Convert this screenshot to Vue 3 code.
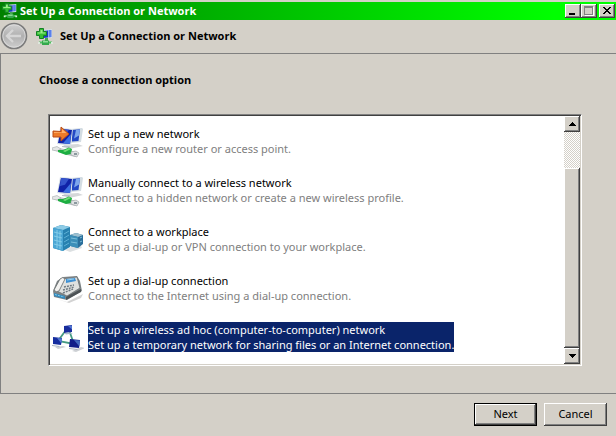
<template>
  <div class="window">
    <header class="title-bar">
      <svg class="title-icon" width="16" height="16" viewBox="0 0 18 18" aria-hidden="true">
        <use href="#connection-icon" />
      </svg>
      <span class="title-text">{{ title }}</span>
      <div class="window-buttons">
        <button type="button" class="bevel caption-btn" aria-label="Minimize">
          <svg width="12" height="10" shape-rendering="crispEdges"><path d="M2 7h6v2H2z" /></svg>
        </button>
        <button type="button" class="bevel caption-btn" aria-label="Maximize" disabled>
          <svg width="12" height="10" shape-rendering="crispEdges">
            <path d="M2 1h9v9H2z" fill="#fff" />
            <path d="M1 0h9v9H1z" fill="#808080" />
            <path d="M2 2h7v6H2z" fill="#d4d0c8" />
          </svg>
        </button>
        <button type="button" class="bevel caption-btn close-btn" aria-label="Close">
          <svg width="12" height="10" shape-rendering="crispEdges">
            <path d="M2 1h2v1h1v1h2V2h1V1h2v1H9v1H8v1H7v1h1v1h1v1h1v1H8V7H7V6H5v1H4v1H2V7h1V6h1V5h1V4H4V3H3V2H2z" />
          </svg>
        </button>
      </div>
    </header>

    <div class="wizard-header">
      <button type="button" class="back-btn" aria-label="Back" disabled>
        <svg width="28" height="28" viewBox="0 0 28 28">
          <defs>
            <linearGradient id="back-fill" x1="0" y1="0" x2="0" y2="1">
              <stop offset="0" stop-color="#d2d2d2" />
              <stop offset=".5" stop-color="#b0b0b0" />
              <stop offset="1" stop-color="#cfcfcf" />
            </linearGradient>
          </defs>
          <circle cx="14" cy="14" r="12.5" fill="url(#back-fill)" stroke="#7c7c7c" stroke-width="1.6" />
          <circle cx="14" cy="14" r="11.2" fill="none" stroke="#dedede" stroke-width=".8" />
          <path d="M13 8l-6 6 6 6M7.500 14H21" fill="none" stroke="#d6d6d6" stroke-width="2.400" />
        </svg>
      </button>
      <svg class="wizard-icon" width="18" height="18" viewBox="0 0 18 18" aria-hidden="true">
        <g id="connection-icon">
          <path d="M6 2l10-1v9l-9 1z" fill="#d5dde5" />
          <path d="M7 3l5-.5v7L7.500 10z" fill="#1838c8" />
          <path d="M12.500 2l3 0v7l-3 .5z" fill="#5a80ec" />
          <path d="M8 3l3-.3-2 5H7.500z" fill="#7fa5f5" />
          <path d="M9 10h3v4H9z" fill="#47a853" />
          <path d="M3 13.500h13v2H3z" fill="#4fc261" />
          <path d="M6 12.500h7v4.500H6z" fill="#35a84c" />
          <path d="M7 13h5v1.500H7z" fill="#8be096" />
          <path d="M2 14h2v2H2zM15 14h2v2h-2z" fill="#dce8dc" />
          <path d="M3.500.5h4v3h3v4h-3v3h-4v-3h-3v-4h3z" fill="#36be35" stroke="#158126" />
          <path d="M4.500 2h2v2.500h3v1h-8v-1h3z" fill="#9aed88" />
        </g>
      </svg>
      <span class="title-text">{{ title }}</span>
    </div>

    <main class="content">
      <h1 class="heading">Choose a connection option</h1>

      <div class="list-box">
        <ul class="options">
          <li v-for="option in options" :key="option.id">
            <button
              type="button"
              class="option"
              :class="{ selected: selected === option.id }"
              :aria-pressed="selected === option.id"
              @click="selected = option.id"
            >
              <svg class="option-icon" width="32" height="32" viewBox="0 0 32 32" aria-hidden="true">
                <g v-if="option.icon === 'router' || option.icon === 'wireless'">
                  <path d="M11 19l15-1 5 2-14 3z" fill="#d5d7d9" />
                  <path d="M19 3l11-1 1 1-2 13-10 1z" fill="#d3dce2" />
                  <path d="M20 4l8-.7-1.500 11.700-6.500.5z" fill="#2448c4" />
                  <path d="M24 4l4-.5-1 6-5 3z" fill="#7da6ec" />
                  <path d="M8 2l13 1-2 17L5 18z" fill="#d6dfe8" />
                  <path d="M9 3l11 1-2 14L6 17z" fill="#1022a8" />
                  <path d="M9 3l8 .8-4 6-5 1.200z" fill="#3554cc" />
                  <path d="M19 8l-1 10-7-.7z" fill="#3d70e2" />
                  <path d="M10 20l8 0-1 2-7-1z" fill="#b8bfc7" />
                  <path d="M1 23l7-1 17 4 2 2-4 3-8-2-14-5z" fill="#c4c9cb" />
                  <path d="M0 22l5-1.500 4 2.500-4 2-5-1z" fill="#e5e7e8" stroke="#a3a8aa" stroke-width=".6" />
                  <path d="M6 24l5 0 6-2.500 3 1.500-1 5-5 1-8-3z" fill="#1dae42" />
                  <path d="M11 25l6-3 2 1-6 3z" fill="#74dc78" />
                  <path d="M19 26l5-1 3 2-2 4-6-2z" fill="#dfe2e3" stroke="#9ca2a5" stroke-width=".6" />
                  <path d="M22 27h3v2h-3z" fill="#8b999f" />
                  <g v-if="option.icon === 'router'">
                    <path d="M1 5l8 .5V1l8 7-8 7v-4H1z" fill="#ed7b29" stroke="#b94b16" />
                    <path d="M2 6l8 .4V3l4.500 4H2z" fill="#ffb06a" />
                  </g>
                </g>

                <g v-else-if="option.icon === 'workplace'">
                  <path d="M13 26l6-3 10-1 1 2-12 4z" fill="#dce0e2" />
                  <path d="M1 4l8-3 9 2v20l-7 4L1 24z" fill="#2781b0" />
                  <path d="M1 4l8-3 9 2-7 3z" fill="#8dcbe6" />
                  <path d="M1 4l10 2v21L1 24z" fill="#4ba6d4" />
                  <path d="M2 8l8 2M2 12l8 2M2 16l8 2M2 20l8 2M5 6v18M8 7v18" stroke="#83cdea" />
                  <path d="M12 10l5-3M12 14l5-3M12 18l5-3M12 22l5-3" stroke="#5cb0d6" />
                  <path d="M18 11l6-2 7 2v9l-5 4-8-2z" fill="#2b6f9b" />
                  <path d="M18 11l6-2 7 2-5 2z" fill="#9dc0d0" />
                  <path d="M18 11l8 2v11l-8-2z" fill="#3d8fb8" />
                  <path d="M19 14l6 1M19 18l6 1M28 14l2-1M28 18l2-1" stroke="#7bbedb" />
                </g>

                <g v-else-if="option.icon === 'phone'">
                  <path d="M5 26l10 3 16-8-2 4-12 5z" fill="#d3d3d3" />
                  <path d="M1 18l4-10 6-4L25 3l3 5 2 10-15 9-13-3z" fill="#7e8486" />
                  <path d="M3 17l7-11 15-2 3 11-13 8z" fill="#dfe1df" stroke="#63696b" stroke-width=".7" />
                  <path d="M14 6l9-1 1 3-10 2z" fill="#3e90d3" />
                  <path d="M15 7l7-1" stroke="#91cff1" />
                  <path d="M12 14l10-2M11 17l11-3M11 20l10-4" stroke="#6f7a82" stroke-width="1.500" stroke-dasharray="2 1" />
                  <path d="M2 17l6-11q3-3 5 0l-6 12q-3 2-5-1z" fill="#f2f2f0" stroke="#63696b" stroke-width=".8" />
                  <path d="M2 20l11 3v3L2 23z" fill="#3387bb" />
                  <path d="M3 21.500l9 2.500" stroke="#7dccea" stroke-dasharray="2 1" />
                  <path d="M14 24l15-8v3l-15 8z" fill="#4c5255" />
                </g>

                <g v-else>
                  <path d="M14 8L6 19l16 3L17 8" fill="none" stroke="#459b83" stroke-width="1.800" />
                  <path d="M3 25l8-1 3 1-8 2zM20 29l9-4 4 1-9 4z" fill="#cdd0d4" />
                  <path d="M12 4l8-1v7l-8 1z" fill="#182c9c" />
                  <path d="M16 4l4-.5v4z" fill="#5275d2" />
                  <path d="M12 11l6-.5 3 1-7 1z" fill="#a7b9c6" />
                  <path d="M1 15l9 1-1 7-8-1z" fill="#152d9f" />
                  <path d="M5 16l5 .5-.5 5z" fill="#557ad0" />
                  <path d="M0 23l8 1-1 1-7-1z" fill="#a8b4c2" />
                  <path d="M18 17l10 1-1 8-10-1z" fill="#101d89" />
                  <path d="M22 18l6 .5-.6 6z" fill="#4066bd" />
                  <path d="M17 26l9 1-1 1-8-1z" fill="#a9b2be" />
                </g>
              </svg>
              <span class="option-text">
                <span class="option-title">{{ option.title }}</span>
                <span class="option-note">{{ option.note }}</span>
              </span>
            </button>
          </li>
        </ul>

        <div class="scrollbar">
          <button type="button" class="bevel scroll-btn" aria-label="Scroll up">
            <svg width="7" height="4" shape-rendering="crispEdges"><path d="M3 0h1v1h1v1h1v1h1v1H0V3h1V2h1V1h1z" /></svg>
          </button>
          <div class="scroll-track"></div>
          <div class="bevel scroll-thumb"></div>
          <button type="button" class="bevel scroll-btn" aria-label="Scroll down">
            <svg width="7" height="4" shape-rendering="crispEdges"><path d="M0 0h7v1H6v1H5v1H4v1H3V3H2V2H1V1H0z" /></svg>
          </button>
        </div>
      </div>
    </main>

    <footer class="footer">
      <button type="button" class="default-frame"><span class="bevel push-btn">Next</span></button>
      <button type="button" class="bevel push-btn">Cancel</button>
    </footer>
  </div>
</template>

<script setup>
import { ref } from 'vue'

const title = 'Set Up a Connection or Network'

const options = [
  { id: 1, icon: 'router', title: 'Set up a new network', note: 'Configure a new router or access point.' },
  { id: 2, icon: 'wireless', title: 'Manually connect to a wireless network', note: 'Connect to a hidden network or create a new wireless profile.' },
  { id: 3, icon: 'workplace', title: 'Connect to a workplace', note: 'Set up a dial-up or VPN connection to your workplace.' },
  { id: 4, icon: 'phone', title: 'Set up a dial-up connection', note: 'Connect to the Internet using a dial-up connection.' },
  { id: 5, icon: 'adhoc', title: 'Set up a wireless ad hoc (computer-to-computer) network', note: 'Set up a temporary network for sharing files or an Internet connection.' }
]

const selected = ref(5)
</script>

<style>
body {
  margin: 0;
  background: #d4d0c8;
}
</style>

<style scoped>
.window {
  box-sizing: border-box;
  display: flex;
  flex-direction: column;
  min-height: 100vh;
  padding-top: 2px;
  background: #d4d0c8;
  color: #000;
  font-family: "Noto Sans", "Open Sans", sans-serif;
  font-size: 11px;
  line-height: 15px;
}

button {
  box-sizing: border-box;
  margin: 0;
  padding: 0;
  border: 0;
  background: none;
  color: inherit;
  font: inherit;
}

svg {
  display: block;
}

.bevel {
  background: #d4d0c8;
  box-shadow: inset -1px -1px #404040, inset 1px 1px #fff, inset -2px -2px #808080;
}

.title-bar {
  display: flex;
  align-items: center;
  height: 18px;
  padding: 0 1px 0 2px;
  background: linear-gradient(to right, #008000, #00ff00 90%);
  color: #fff;
}

.title-text,
.heading {
  font-family: "Open Sans", sans-serif;
  font-size: 11px;
  font-weight: 700;
}

.title-text {
  padding-bottom: 2px;
}

.title-bar .title-text {
  margin-left: 2px;
}

.window-buttons {
  display: flex;
  margin-left: auto;
}

.caption-btn {
  display: flex;
  align-items: center;
  justify-content: center;
  width: 16px;
  height: 14px;
}

.close-btn {
  margin-left: 2px;
}

.wizard-header {
  display: flex;
  align-items: center;
  height: 33px;
}

.back-btn {
  padding-bottom: 2px;
}

.wizard-icon {
  margin: 0 6px 0 8px;
}

.content {
  flex: 1;
  display: flex;
  flex-direction: column;
  padding: 18px 34px 27px 47px;
  border-top: 1px solid #808080;
  border-left: 1px solid #808080;
}

.heading {
  margin: 0 0 27px -9px;
}

.list-box {
  flex: 1;
  display: flex;
  padding: 1px;
  border: 1px solid;
  border-color: #808080 #fff #fff #808080;
  background: #fff;
  box-shadow: inset 1px 1px #404040, inset -1px -1px #d4d0c8;
}

.options {
  flex: 1;
  display: flex;
  flex-direction: column;
  gap: 17px;
  margin: 0;
  padding: 10px 2px;
  list-style: none;
}

.option {
  display: flex;
  align-items: flex-start;
  gap: 4px;
  width: 100%;
  height: 32px;
  text-align: left;
}

.option-icon {
  flex: none;
}

.option-title,
.option-note {
  display: block;
}

.option-note {
  color: #808080;
}

.selected .option-text {
  background: #0a246a;
  color: #fff;
}

.selected .option-note {
  color: #fff;
}

.scrollbar {
  display: flex;
  flex-direction: column;
  width: 16px;
}

.scroll-btn {
  display: flex;
  align-items: center;
  justify-content: center;
  height: 16px;
}

.scroll-track {
  flex: 36;
  background: repeating-conic-gradient(#fff 0 25%, #d4d0c8 0 50%) 0 0 / 2px 2px;
}

.scroll-thumb {
  flex: 180;
}

.footer {
  display: flex;
  justify-content: flex-end;
  gap: 7px;
  padding: 9px 9px 10px;
  border-top: 1px solid #808080;
}

.push-btn {
  box-sizing: border-box;
  display: flex;
  align-items: center;
  justify-content: center;
  width: 63px;
  height: 23px;
  padding-bottom: 2px;
}

.default-frame {
  border: 1px solid #000;
}

.default-frame .push-btn {
  width: 61px;
  height: 21px;
}
</style>
